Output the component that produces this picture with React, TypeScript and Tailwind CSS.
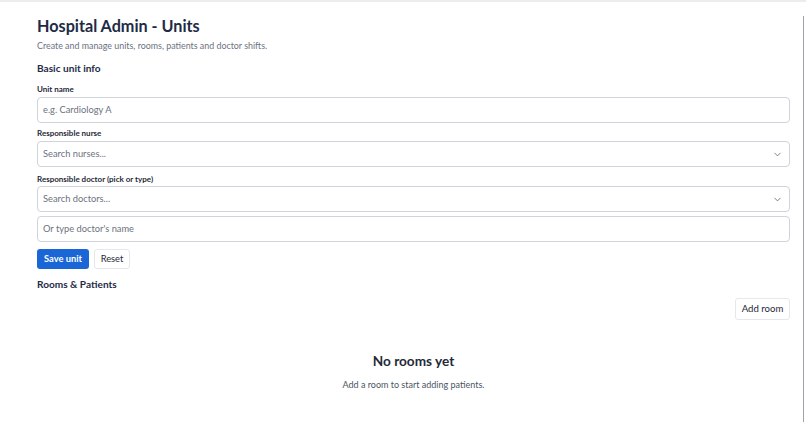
import { ChevronDown } from "lucide-react";

const font = { fontFamily: 'Lato, "Open Sans", sans-serif' };

function Label({ children, className = "" }: { children: React.ReactNode; className?: string }) {
  return (
    <div className={`h-[10px] flex items-center text-[8px] font-bold text-[#1f2937] ${className}`}>{children}</div>
  );
}

function Field({ placeholder, select, className = "" }: { placeholder: string; select?: boolean; className?: string }) {
  return (
    <div
      className={`h-[26px] border border-[#cfd4da] rounded-[4px] flex items-center justify-between pl-[5px] pr-[6px] text-[9.3px] text-[#6b7280] ${className}`}
    >
      <span>{placeholder}</span>
      {select && <ChevronDown className="w-[11px] h-[11px] text-[#4b5563]" strokeWidth={1.6} />}
    </div>
  );
}

export default function App() {
  return (
    <div className="relative w-[806px] h-[428px] bg-white overflow-hidden border-t-2 border-[#ececec]" style={font}>
      {/* fake scrollbar */}
      <div className="absolute right-[2px] top-[14px] bottom-[6px] w-px bg-[#9ca3af]" />

      <div className="pl-[37px] pr-[16px] pt-[12px]">
        <h1 className="h-[24px] flex items-center text-[16.2px] font-bold text-[#1e2b45]">Hospital Admin - Units</h1>
        <p className="h-[12px] mt-[2px] flex items-center text-[8.9px] text-[#6b7280]">
          Create and manage units, rooms, patients and doctor shifts.
        </p>

        <h2 className="h-[16px] mt-[9px] flex items-center text-[10.1px] font-bold text-[#1e2b45]">Basic unit info</h2>

        <Label className="mt-[7px]">Unit name</Label>
        <Field className="mt-[3px]" placeholder="e.g. Cardiology A" />

        <Label className="mt-[5px]">Responsible nurse</Label>
        <Field className="mt-[3px]" placeholder="Search nurses..." select />

        <Label className="mt-[7px]">Responsible doctor (pick or type)</Label>
        <Field className="mt-[2px]" placeholder="Search doctors..." select />
        <Field className="mt-[4px]" placeholder="Or type doctor's name" />

        <div className="flex gap-[5px] mt-[7px]">
          <button className="h-[20px] w-[52px] rounded-[3px] bg-[#1a66d6] text-white text-[9.3px] font-bold">
            Save unit
          </button>
          <button className="h-[20px] w-[36px] rounded-[3px] border border-[#e5e7eb] text-[#1f2937] text-[9.3px]">
            Reset
          </button>
        </div>

        <h2 className="h-[16px] mt-[8px] flex items-center text-[10.1px] font-bold text-[#1e2b45]">Rooms &amp; Patients</h2>

        <div className="flex justify-end mt-[5px]">
          <button className="h-[22px] w-[55px] rounded-[3px] border border-[#e5e7eb] text-[#1f2937] text-[9.6px]">
            Add room
          </button>
        </div>

        <div className="flex flex-col items-center mt-[32px]">
          <div className="h-[18px] flex items-center text-[13.6px] font-bold text-[#1f2937]">No rooms yet</div>
          <div className="h-[12px] mt-[9px] flex items-center text-[9px] text-[#4b5563]">
            Add a room to start adding patients.
          </div>
        </div>
      </div>
    </div>
  );
}
